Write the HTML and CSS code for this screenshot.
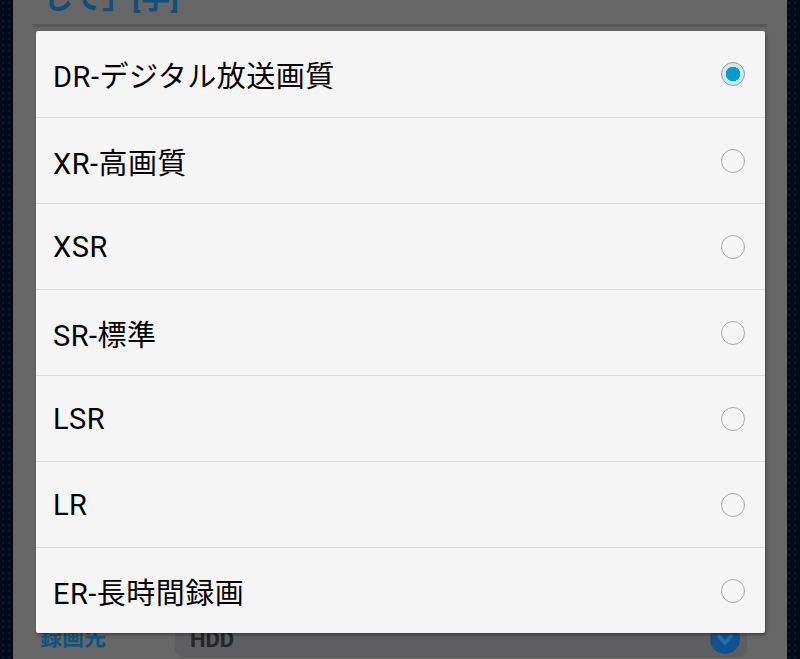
FILE: index.html
```html
<!DOCTYPE html>
<html lang="ja">
<head>
    <meta charset="UTF-8">
    <meta name="viewport" content="width=device-width, initial-scale=1.0">
    <title>録画画質</title>
    <link rel="stylesheet" href="styles.css">
</head>
<body>
    <div class="screen">
        <div class="panel">
            <div class="title">して」[字]</div>
            <div class="form">
                <div class="form-row">
                    <span class="label">録画先</span>
                    <div class="field">
                        <span class="value">HDD</span>
                        <span class="drop">
                            <svg width="30" height="30" viewBox="0 0 30 30">
                                <circle cx="15" cy="15" r="15" fill="#14508a"/>
                                <path d="M8 11 L15 19 L22 11" stroke="#1d6db0" stroke-width="4" fill="none"/>
                            </svg>
                        </span>
                    </div>
                </div>
            </div>
        </div>

        <!-- quality picker dialog -->
        <div class="dialog">
            <div class="option"><span>DR-デジタル放送画質</span><span class="radio checked"></span></div>
            <div class="option"><span>XR-高画質</span><span class="radio"></span></div>
            <div class="option"><span>XSR</span><span class="radio"></span></div>
            <div class="option"><span>SR-標準</span><span class="radio"></span></div>
            <div class="option"><span>LSR</span><span class="radio"></span></div>
            <div class="option"><span>LR</span><span class="radio"></span></div>
            <div class="option"><span>ER-長時間録画</span><span class="radio"></span></div>
        </div>
    </div>
</body>
</html>
```

FILE: styles.css
```css
html, body {
    margin: 0;
    height: 100%;
    overflow: hidden;
}
body {
    background-color: #020a1b;
    background-image: radial-gradient(#0b1830 1px, transparent 1.5px);
    background-size: 6px 6px;
    font-family: Roboto, "Noto Sans CJK JP", sans-serif;
}
.screen {
    position: relative;
    height: 659px;
}
.panel {
    margin: 0 13px;
    height: 100%;
    background-color: #666666;
    display: flex;
    flex-direction: column;
}
.title {
    margin: -21px 20px 0 20px;
    padding: 0 10px 2px;
    height: 43px;
    font-size: 30px;
    font-weight: bold;
    line-height: 38px;
    color: #134f78;
    border-bottom: 3px solid #575757;
}
.form {
    margin-top: auto;
}
.form-row {
    display: flex;
    align-items: flex-end;
    height: 40px;
}
.label {
    width: 135px;
    padding-left: 27px;
    padding-bottom: 8px;
    font-size: 22px;
    font-weight: bold;
    color: #11527e;
}
.field {
    flex: 1;
    margin-right: 40px;
    margin-bottom: 2px;
    height: 40px;
    display: flex;
    align-items: center;
    background-color: #5e5d61;
    border-radius: 0 0 8px 8px;
    box-sizing: border-box;
    padding: 0 7px 0 15px;
}
.value {
    font-size: 22px;
    font-weight: bold;
    color: #262626;
    padding-top: 4px;
}
.drop {
    margin-left: auto;
    display: flex;
    padding-top: 4px;
}
.dialog {
    position: absolute;
    left: 36px;
    top: 31px;
    width: 729px;
    background-color: #f5f5f5;
    border-radius: 2px;
    box-shadow: 1px 2px 3px rgba(0, 0, 0, 0.35);
}
.option {
    height: 86px;
    display: flex;
    align-items: center;
    justify-content: space-between;
    padding: 0 20px 0 17px;
    font-size: 29px;
    letter-spacing: 0.5px;
    color: #000000;
    border-top: 1px solid #dcdcdc;
    box-sizing: border-box;
}
.option:first-child {
    border-top: none;
}
.radio {
    width: 24px;
    height: 24px;
    border-radius: 50%;
    border: 1.5px solid #a8a8a8;
    box-sizing: border-box;
}
.radio.checked {
    background-image: radial-gradient(circle, #0a9ad2 0, #0a9ad2 7px, #cde9f4 7.5px);
    border-color: #9a9a9a;
}
```
